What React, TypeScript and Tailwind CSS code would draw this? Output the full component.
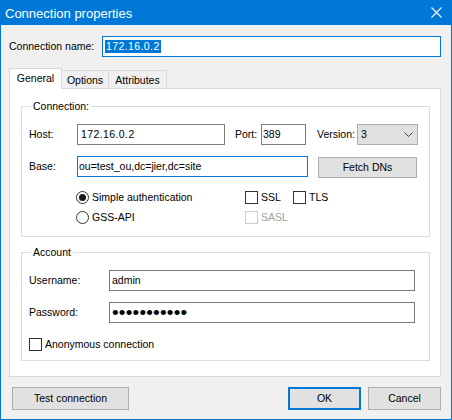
import React from "react";

function Radio({ checked }: { checked?: boolean }) {
  return (
    <span className="w-[13px] h-[13px] rounded-full border border-[#333333] bg-white flex items-center justify-center shrink-0">
      {checked && <span className="w-[7px] h-[7px] rounded-full bg-[#1a1a1a]" />}
    </span>
  );
}

function Check({ disabled }: { disabled?: boolean }) {
  return (
    <span
      className={
        disabled
          ? "w-[13px] h-[13px] border border-[#cccccc] bg-white shrink-0"
          : "w-[13px] h-[13px] border border-[#333333] bg-white shrink-0"
      }
    />
  );
}

export default function App() {
  return (
    <div className="w-[452px] h-[420px] bg-[#f0f0f0] border-x border-b border-[#0078d7] flex flex-col font-['Liberation_Sans',Arial,sans-serif] text-[10.5px] leading-none text-black">
      {/* Title bar */}
      <div className="h-[25px] shrink-0 bg-[#0078d7] flex items-center justify-between pl-[4px] pr-[9px] text-white text-[13px]">
        <span className="pt-px">Connection properties</span>
        <svg width="11" height="11" viewBox="0 0 11 11">
          <path d="M0.5 0.5 L10.5 10.5 M10.5 0.5 L0.5 10.5" stroke="#ffffff" strokeWidth="1.1" fill="none" />
        </svg>
      </div>

      {/* Connection name */}
      <div className="mt-[11px] pl-[8px] flex items-center">
        <span className="w-[93px]">Connection name:</span>
        <div className="w-[339px] h-[21px] border border-[#0078d7] bg-white flex items-center pl-[2px]">
          <span className="bg-[#0078d7] text-white h-[13px] flex items-center px-px tracking-[0.4px]">172.16.0.2</span>
        </div>
      </div>

      {/* Tabs */}
      <div className="mt-[11px] ml-[8px] h-[20px] flex items-end">
        <div className="relative z-10 -mb-px w-[53px] h-[21px] border border-b-0 border-[#d9d9d9] bg-white flex items-center justify-center pb-px">
          General
        </div>
        <div className="w-[47px] h-[18px] border-t border-r border-[#d9d9d9] bg-[#f0f0f0] flex items-center justify-center pt-px">
          Options
        </div>
        <div className="w-[58px] h-[18px] border-t border-r border-[#d9d9d9] bg-[#f0f0f0] flex items-center justify-center pt-px">
          Attributes
        </div>
      </div>

      {/* Panel */}
      <div className="ml-[8px] w-[432px] h-[289px] border border-[#d9d9d9] bg-white px-[11px] flex flex-col">
        <fieldset className="mt-[10px] w-[409px] border border-[#dcdcdc] pb-[8px]">
          <legend className="ml-[9px] px-[2px] leading-[14px]">Connection:</legend>
          <div className="mt-[11px] pl-[7px] flex items-center h-[21px]">
            <span className="w-[48px]">Host:</span>
            <div className="w-[148px] h-[21px] border border-[#7a7a7a] flex items-center pl-[3px] tracking-[0.4px]">172.16.0.2</div>
            <span className="ml-[10px] w-[26px]">Port:</span>
            <div className="w-[45px] h-[21px] border border-[#7a7a7a] flex items-center pl-[1px]">389</div>
            <span className="ml-[11px] w-[40px]">Version:</span>
            <div className="w-[61px] h-[21px] border border-[#adadad] bg-[#e1e1e1] flex items-center justify-between pl-[3px] pr-[4px]">
              <span>3</span>
              <svg width="9" height="5" viewBox="0 0 9 5">
                <path d="M0.5 0.5 L4.5 4.5 L8.5 0.5" stroke="#444444" strokeWidth="1" fill="none" />
              </svg>
            </div>
          </div>
          <div className="mt-[11px] pl-[7px] flex items-start">
            <span className="w-[48px] h-[21px] flex items-center">Base:</span>
            <div className="w-[231px] h-[21px] border border-[#0078d7] flex items-center pl-[1px]">ou=test_ou,dc=jier,dc=site</div>
            <div className="ml-[10px] mt-px w-[99px] h-[21px] border border-[#adadad] bg-[#e1e1e1] flex items-center justify-center">
              Fetch DNs
            </div>
          </div>
          <div className="mt-[9px] pl-[54px] flex items-center h-[20px]">
            <div className="w-[169px] flex items-center gap-[3px]">
              <Radio checked />
              <span>Simple authentication</span>
            </div>
            <div className="w-[48px] flex items-center gap-[3px]">
              <Check />
              <span>SSL</span>
            </div>
            <div className="flex items-center gap-[3px]">
              <Check />
              <span>TLS</span>
            </div>
          </div>
          <div className="pl-[54px] flex items-center h-[21px]">
            <div className="w-[169px] flex items-center gap-[3px]">
              <Radio />
              <span>GSS-API</span>
            </div>
            <div className="flex items-center gap-[3px] text-[#a0a0a0]">
              <Check disabled />
              <span>SASL</span>
            </div>
          </div>
        </fieldset>

        <fieldset className="mt-[8px] w-[409px] border border-[#dcdcdc] pb-[6px]">
          <legend className="ml-[9px] px-[2px] leading-[14px]">Account</legend>
          <div className="mt-[11px] pl-[7px] flex items-center h-[21px]">
            <span className="w-[80px]">Username:</span>
            <div className="w-[306px] h-[21px] border border-[#7a7a7a] flex items-center pl-[2px]">admin</div>
          </div>
          <div className="mt-[11px] pl-[7px] flex items-center h-[21px]">
            <span className="w-[80px]">Password:</span>
            <div className="w-[306px] h-[21px] border border-[#7a7a7a] flex items-center pl-[2px] overflow-hidden">
              <span className="text-[19px] leading-[21px] tracking-[0.2px]">•••••••••••</span>
            </div>
          </div>
          <div className="mt-[11px] pl-[7px] flex items-center h-[20px] gap-[3px]">
            <Check />
            <span>Anonymous connection</span>
          </div>
        </fieldset>
      </div>

      {/* Bottom buttons */}
      <div className="mt-[10px] pl-[11px] pr-[10px] flex items-center">
        <div className="w-[117px] h-[23px] border border-[#adadad] bg-[#e1e1e1] flex items-center justify-center">
          Test connection
        </div>
        <div className="ml-auto w-[73px] h-[23px] border-2 border-[#0078d7] bg-[#e1e1e1] flex items-center justify-center">
          OK
        </div>
        <div className="ml-[7px] w-[73px] h-[23px] border border-[#adadad] bg-[#e1e1e1] flex items-center justify-center">
          Cancel
        </div>
      </div>
    </div>
  );
}
